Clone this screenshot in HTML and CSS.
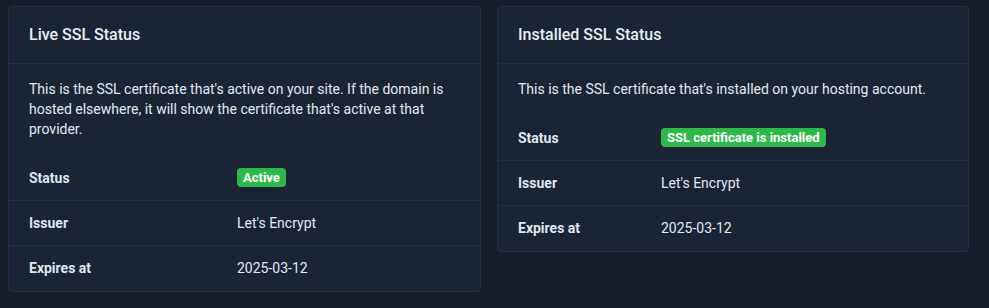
FILE: index.html
```html
<!DOCTYPE html>
<html lang="en">
<head>
  <meta charset="UTF-8" />
  <meta name="viewport" content="width=device-width, initial-scale=1.0"/>
  <title>SSL Status</title>
  <link rel="stylesheet" href="styles.css">
</head>
<body>
  <div class="cards">
    <div class="card card-live">
      <div class="card-header">
        <h2>Live SSL Status</h2>
      </div>
      <div class="card-body">
        <p>This is the SSL certificate that's active on your site. If the domain is hosted elsewhere, it will show the certificate that's active at that provider.</p>
      </div>
      <div class="info-list">
        <div class="info-row">
          <div class="info-label">Status</div>
          <div class="info-value"><span class="badge">Active</span></div>
        </div>
        <div class="info-row">
          <div class="info-label">Issuer</div>
          <div class="info-value">Let's Encrypt</div>
        </div>
        <div class="info-row">
          <div class="info-label">Expires at</div>
          <div class="info-value">2025-03-12</div>
        </div>
      </div>
    </div>

    <div class="card card-installed">
      <div class="card-header">
        <h2>Installed SSL Status</h2>
      </div>
      <div class="card-body">
        <p>This is the SSL certificate that's installed on your hosting account.</p>
      </div>
      <div class="info-list">
        <div class="info-row">
          <div class="info-label">Status</div>
          <div class="info-value"><span class="badge">SSL certificate is installed</span></div>
        </div>
        <div class="info-row">
          <div class="info-label">Issuer</div>
          <div class="info-value">Let's Encrypt</div>
        </div>
        <div class="info-row">
          <div class="info-label">Expires at</div>
          <div class="info-value">2025-03-12</div>
        </div>
      </div>
    </div>
  </div>
</body>
</html>
```

FILE: styles.css
```css
body {
  margin: 0;
  font-family: Roboto, 'Liberation Sans', sans-serif;
  background-color: #161e2a;
  color: #e2e8ef;
  font-size: 14px;
}
.cards {
  display: grid;
  grid-template-columns: 473px 472px;
  gap: 16px;
  align-items: start;
  padding: 6px 20px 0 8px;
}
.card {
  background: #1a2435;
  border: 1px solid #243043;
  border-radius: 4px;
}
.card-header {
  padding: 16px 20px;
  border-bottom: 1px solid #243043;
}
.card-header h2 {
  margin: 0;
  font-size: 16px;
  font-weight: 500;
  line-height: 24px;
  color: #e8edf2;
}
.card-body {
  padding: 15px 20px 17px;
}
.card-body p {
  margin: 0;
  line-height: 20px;
}
.info-list {
  padding-bottom: 1px;
}
.info-row {
  display: grid;
  padding: 12px 20px;
  line-height: 20px;
  border-bottom: 1px solid #243043;
}
.info-row:last-child {
  border-bottom: none;
}
.card-live .info-row {
  grid-template-columns: 208px 1fr;
}
.card-installed .info-row {
  grid-template-columns: 143px 1fr;
}
.info-label {
  font-weight: 700;
  color: #dfe6ee;
}
.badge {
  display: inline-block;
  background: #2db84b;
  color: #fff;
  font-size: 13px;
  font-weight: 700;
  line-height: 13px;
  padding: 3px 6px;
  border-radius: 4px;
  vertical-align: 1px;
}
```
